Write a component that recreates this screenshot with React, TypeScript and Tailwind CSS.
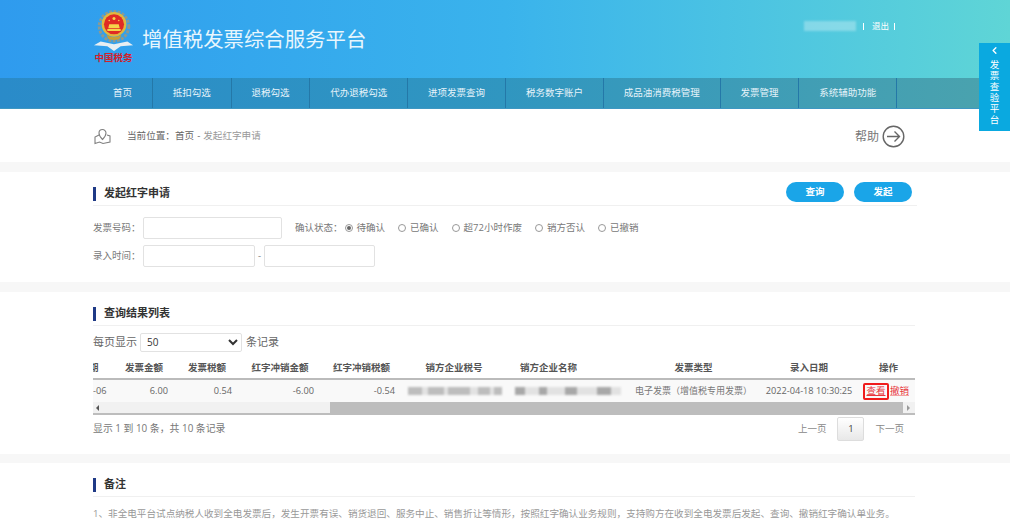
import { ChevronLeft } from "lucide-react"

const navItems = ["首页", "抵扣勾选", "退税勾选", "代办退税勾选", "进项发票查询", "税务数字账户", "成品油消费税管理", "发票管理", "系统辅助功能"]
const statuses = ["待确认", "已确认", "超72小时作废", "销方否认", "已撤销"]
const taxIdBlur = [14, 6, 16, 4, 22, 8, 12, 4, 8]
const nameBlur = [10, 14, 8, 18, 12, 20, 14, 10]
const sans = "font-['Open_Sans','Noto_Sans_CJK_SC',sans-serif]"

function Emblem() {
  return (
    <svg width="42" height="42" viewBox="0 0 42 44">
      <path d="M7 33 L0 37 L14 38 L21 43 L28 38 L41 37 L35 33 L21 36 Z" fill="#e8eef2" />
      <circle cx="21" cy="17" r="15.5" fill="none" stroke="#8a9a94" strokeWidth="3" strokeDasharray="3 1.5" />
      <circle cx="21" cy="15" r="13" fill="#e0b83f" />
      <circle cx="21" cy="15" r="10.5" fill="#e02a24" />
      <circle cx="21" cy="9" r="1.6" fill="#f5d44a" />
      <circle cx="16" cy="11" r="0.8" fill="#f5d44a" />
      <circle cx="26" cy="11" r="0.8" fill="#f5d44a" />
      <path d="M14 20h14v2H14z M16 15h10l1 4H15z" fill="#f5d44a" />
      <path d="M13 26 Q21 31 29 26 L27 30 Q21 33 15 30 Z" fill="#c99f34" />
    </svg>
  )
}

function SectionTitle({ children, extra }: { children: string; extra?: React.ReactNode }) {
  return (
    <div className="flex items-center justify-between h-[24px] border-b border-[#f0f0f0]">
      <div className="flex items-center gap-[8px]">
        <span className="w-[3px] h-[14px] bg-[#1f3a86]" />
        <span className="text-[11px] font-bold text-[#333]">{children}</span>
      </div>
      {extra}
    </div>
  )
}

function Band() {
  return <div className="h-[10px] shrink-0 bg-[#f7f7f7]" />
}

function Field({ className }: { className: string }) {
  return <div className={`h-[22px] bg-white border border-[#e2e2e2] rounded-[2px] ${className}`} />
}

function BlurBar({ widths, tone }: { widths: number[]; tone: string }) {
  return (
    <div className="flex h-[8px] blur-[1.2px]">
      {widths.map((w, i) => (
        <span key={i} className={i % 2 === 0 ? tone : "bg-[#e2e2e2]"} style={{ width: w }} />
      ))}
    </div>
  )
}

export default function App() {
  return (
    <div className={`w-[1016px] h-[528px] overflow-hidden bg-white ${sans}`}>
      <div className="relative w-[1010px] h-[528px] flex flex-col overflow-hidden">
        <header className="h-[78px] shrink-0 bg-gradient-to-r from-[#2f9bee] via-[#3ab3ec] to-[#5fd5d6] pl-[93px] flex">
          <div className="pt-[10px] flex flex-col items-center w-[41px]">
            <Emblem />
            <span className="text-[9.5px] leading-[12px] font-bold text-[#d3202a] whitespace-nowrap">中国税务</span>
          </div>
          <h1 className="ml-[8px] mt-[26px] text-[20.4px] leading-[26px] text-[#e8f6fd] whitespace-nowrap">增值税发票综合服务平台</h1>
          <div className="ml-auto mr-[115px] mt-[21px] flex items-center h-[10px] text-[8.5px] text-white">
            <span className="w-[52px] h-[10px] bg-white/30 blur-[1px] mr-[7px]" />
            <span className="w-px h-[7px] bg-white" />
            <span className="ml-[8px] mr-[5px]">退出</span>
            <span className="w-px h-[7px] bg-white" />
          </div>
        </header>

        <nav className="h-[31px] shrink-0 bg-gradient-to-r from-[#2a8bc9] via-[#3096c0] to-[#4ba3ad] border-b border-[#3e97c2] pl-[93px] flex">
          {navItems.map((item) => (
            <div key={item} className="px-[19.9px] border-r border-[#2478a8] flex items-center text-[9.5px] text-[#e6f3fa] whitespace-nowrap">
              {item}
            </div>
          ))}
        </nav>

        <div className="h-[53px] shrink-0 pl-[94px] pr-[105px] pt-[2px] flex items-center">
          <svg width="17" height="17" viewBox="0 0 17 17" fill="none" stroke="#808080" strokeWidth="1.1">
            <path d="M5 7 L1 9 L1 15.5 L5.5 14 L9 15.5 L16 14 L16 8 L13 7" />
            <path d="M8.5 11.5 C6 9 5 7.5 5 5 A3.5 3.5 0 0 1 12 5 C12 7.5 11 9 8.5 11.5 Z" />
          </svg>
          <span className="ml-[16px] text-[9.6px] text-[#666]">当前位置：</span>
          <span className="text-[9.6px] text-[#666]">首页</span>
          <span className="mx-[3px] text-[9.6px] text-[#666]">-</span>
          <span className="text-[9.6px] text-[#999]">发起红字申请</span>
          <span className="ml-auto text-[12px] text-[#777]">帮助</span>
          <svg className="ml-[3px]" width="23" height="23" viewBox="0 0 23 23" fill="none" stroke="#666" strokeWidth="1.4">
            <circle cx="11.5" cy="11.5" r="10.3" />
            <path d="M5 11.5 H17.5 M12.5 6.5 L17.5 11.5 L12.5 16.5" />
          </svg>
        </div>

        <Band />

        <section className="h-[110px] shrink-0 px-[93px] pt-[10px]">
          <SectionTitle
            extra={
              <div className="flex gap-[10px] pr-[5px] mb-[3px]">
                <button className="w-[58px] h-[20px] rounded-full bg-[#1aa5e8] text-white text-[9.5px] font-bold">查询</button>
                <button className="w-[58px] h-[20px] rounded-full bg-[#1aa5e8] text-white text-[9.5px] font-bold">发起</button>
              </div>
            }
          >
            发起红字申请
          </SectionTitle>
          <div className="flex items-center mt-[11px] text-[9.5px] text-[#777]">
            <span className="w-[50px] whitespace-nowrap">发票号码：</span>
            <Field className="w-[139px]" />
            <span className="ml-[13px] whitespace-nowrap">确认状态：</span>
            <div className="flex gap-[13px] ml-[2px]">
              {statuses.map((s, i) => (
                <span key={s} className="flex items-center gap-[4px] whitespace-nowrap">
                  <span className="w-[8px] h-[8px] rounded-full border border-[#999] bg-white flex items-center justify-center">
                    {i === 0 && <span className="w-[4px] h-[4px] rounded-full bg-[#666]" />}
                  </span>
                  {s}
                </span>
              ))}
            </div>
          </div>
          <div className="flex items-center mt-[6px] text-[9.5px] text-[#777]">
            <span className="w-[50px] whitespace-nowrap">录入时间：</span>
            <Field className="w-[112px]" />
            <span className="mx-[3px]">-</span>
            <Field className="w-[111px]" />
          </div>
        </section>

        <Band />

        <section className="h-[162px] shrink-0 pl-[93px] pr-[95px] pt-[10px]">
          <SectionTitle>查询结果列表</SectionTitle>
          <div className="flex items-center mt-[6px] h-[20px] text-[11px] text-[#666]">
            每页显示
            <select defaultValue="50" className="ml-[3px] mr-[4px] w-[102px] h-[19px] pl-[2px] text-[10px] text-[#333] bg-white border border-[#e2e2e2] rounded-[2px]">
              <option>50</option>
            </select>
            条记录
          </div>
          <table className="table-fixed w-[822px] mt-[3px] text-[9.5px]">
            <colgroup>
              <col className="w-[20px]" />
              <col className="w-[62px]" />
              <col className="w-[64px]" />
              <col className="w-[82px]" />
              <col className="w-[81px]" />
              <col className="w-[104px]" />
              <col className="w-[125px]" />
              <col className="w-[125px]" />
              <col className="w-[106px]" />
              <col className="w-[53px]" />
            </colgroup>
            <thead>
              <tr className="h-[24px] border-b-2 border-[#bbb] text-[#555] font-bold [&>th]:pt-[3px]">
                <th className="text-left overflow-hidden whitespace-nowrap"><span className="block -ml-[4px]">期</span></th>
                <th>发票金额</th>
                <th>发票税额</th>
                <th>红字冲销金额</th>
                <th>红字冲销税额</th>
                <th>销方企业税号</th>
                <th className="text-left pl-[14px]">销方企业名称</th>
                <th>发票类型</th>
                <th>录入日期</th>
                <th>操作</th>
              </tr>
            </thead>
            <tbody>
              <tr className="h-[23px] bg-[#f9f9f9] text-[9.2px] text-[#666]">
                <td className="overflow-hidden whitespace-nowrap">-06</td>
                <td className="text-right pr-[7px]">6.00</td>
                <td className="text-right pr-[7px]">0.54</td>
                <td className="text-right pr-[7px]">-6.00</td>
                <td className="text-right pr-[7px]">-0.54</td>
                <td><div className="ml-[6px] w-[94px]"><BlurBar widths={taxIdBlur} tone="bg-[#bdbdbd]" /></div></td>
                <td><div className="ml-[9px] w-[106px]"><BlurBar widths={nameBlur} tone="bg-[#a8a8a8]" /></div></td>
                <td className="text-center text-[9px] text-[#777] whitespace-nowrap">电子发票（增值税专用发票）</td>
                <td className="text-center whitespace-nowrap">2022-04-18 10:30:25</td>
                <td className="whitespace-nowrap text-[9.5px] text-[#e8353b]">
                  <div className="flex items-center">
                    <span className="ml-[1px] w-[26px] h-[17px] border-2 border-[#f01c1c] rounded-[2px] flex items-center justify-center underline">查看</span>
                    <span className="ml-[1px] underline decoration-[#f4a0a0]">撤销</span>
                  </div>
                </td>
              </tr>
            </tbody>
          </table>
          <div className="w-[822px] h-[13px] bg-[#f1f1f1] border-b-2 border-[#bdbdbd] flex items-center">
            <span className="ml-[3px] w-0 h-0 border-y-[3px] border-y-transparent border-r-[3px] border-r-[#555]" />
            <span className="ml-[231px] w-[573px] h-full bg-[#bdbdbd]" />
            <span className="ml-[4px] w-0 h-0 border-y-[3px] border-y-transparent border-l-[3px] border-l-[#999]" />
          </div>
          <div className="flex items-center justify-between w-[822px] mt-[2px] h-[24px]">
            <span className="text-[9.9px] text-[#777] -mt-[2px]">显示 1 到 10 条，共 10 条记录</span>
            <div className="flex items-center text-[9.5px] text-[#888] pr-[11px]">
              <span>上一页</span>
              <span className="mx-[11px] w-[27px] h-[24px] flex items-center justify-center border border-[#ddd] rounded-[2px] bg-gradient-to-b from-white to-[#e8e8e8] text-[#444]">1</span>
              <span>下一页</span>
            </div>
          </div>
        </section>

        <div className="h-[9px] shrink-0 bg-[#f7f7f7]" />

        <section className="flex-1 pl-[93px] pr-[95px] pt-[10px]">
          <SectionTitle>备注</SectionTitle>
          <p className="mt-[10px] text-[9.6px] text-[#999] whitespace-nowrap">
            1、非全电平台试点纳税人收到全电发票后，发生开票有误、销货退回、服务中止、销售折让等情形，按照红字确认业务规则，支持购方在收到全电发票后发起、查询、撤销红字确认单业务。
          </p>
        </section>

        <aside className="absolute top-[43px] right-0 w-[31px] h-[88px] bg-[#0aa9e0] text-white flex flex-col items-center pt-[2px]">
          <ChevronLeft size={11} strokeWidth={3} />
          <span className="w-[10px] mt-[3px] text-[9.5px] leading-[11px] text-center">发票查验平台</span>
        </aside>
      </div>
    </div>
  )
}
